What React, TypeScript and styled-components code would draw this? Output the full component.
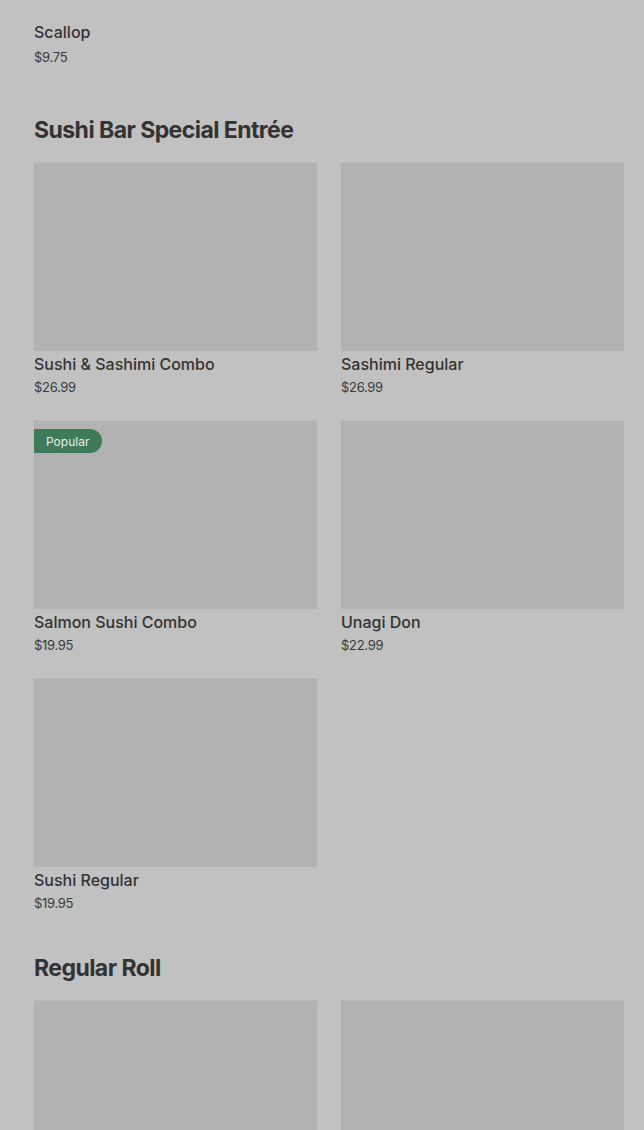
import React from "react";
import styled, { createGlobalStyle } from "styled-components";

const Global = createGlobalStyle`
  html, body { margin: 0; padding: 0; background: #c1c1c1; }
  body { font-family: Inter, "Noto Sans", Arial, sans-serif; color: #333; }
`;

const Page = styled.main`
  padding: 21px 20px 0 34px;
  display: flex;
  flex-direction: column;
`;

const Section = styled.section<{ $top?: number }>`
  margin-top: ${(p) => p.$top ?? 0}px;
  display: flex;
  flex-direction: column;
`;

const Heading = styled.h2`
  margin: 0 0 19px;
  font-size: 23px;
  line-height: 28px;
  font-weight: 700;
  letter-spacing: -0.55px;
  color: #333;
`;

const Grid = styled.div`
  display: grid;
  grid-template-columns: 1fr 1fr;
  column-gap: 24px;
  row-gap: 25px;
`;

const Card = styled.article`
  display: flex;
  flex-direction: column;
`;

const Thumb = styled.div`
  position: relative;
  height: 188px;
  background: #b2b2b2;
  box-shadow: 0 -1px 0 #bababa, inset 1px 0 0 #afafaf;
`;

const Badge = styled.span`
  position: absolute;
  top: 8px;
  left: 0;
  height: 24px;
  padding: 0 13px 0 12px;
  display: flex;
  align-items: center;
  background: #3f7a5b;
  color: #e6efe9;
  font-size: 12px;
  border-radius: 0 12px 12px 0;
`;

const Title = styled.div<{ $mt?: number }>`
  margin-top: ${(p) => p.$mt ?? 2}px;
  font-size: 16px;
  line-height: 22px;
  font-weight: 500;
  color: #333;
`;

const Price = styled.div<{ $mt?: number }>`
  margin-top: ${(p) => p.$mt ?? 3}px;
  font-size: 13px;
  line-height: 18px;
  color: #3a3a3a;
  letter-spacing: -0.3px;
`;

type Item = { name: string; price: string; popular?: boolean };

const special: Item[] = [
  { name: "Sushi & Sashimi Combo", price: "$26.99" },
  { name: "Sashimi Regular", price: "$26.99" },
  { name: "Salmon Sushi Combo", price: "$19.95", popular: true },
  { name: "Unagi Don", price: "$22.99" },
  { name: "Sushi Regular", price: "$19.95" },
];

const MenuCard = ({ item }: { item: Item }) => (
  <Card>
    <Thumb>{item.popular && <Badge>Popular</Badge>}</Thumb>
    <Title>{item.name}</Title>
    <Price>{item.price}</Price>
  </Card>
);

export default function App() {
  return (
    <>
      <Global />
      <Page>
        <Section>
          <Card>
            <Title $mt={0}>Scallop</Title>
            <Price $mt={5}>$9.75</Price>
          </Card>
        </Section>
        <Section $top={50}>
          <Heading>Sushi Bar Special Entrée</Heading>
          <Grid>
            {special.map((it) => (
              <MenuCard key={it.name} item={it} />
            ))}
          </Grid>
        </Section>
        <Section $top={42}>
          <Heading>Regular Roll</Heading>
          <Grid>
            <Card>
              <Thumb />
            </Card>
            <Card>
              <Thumb />
            </Card>
          </Grid>
        </Section>
      </Page>
    </>
  );
}
